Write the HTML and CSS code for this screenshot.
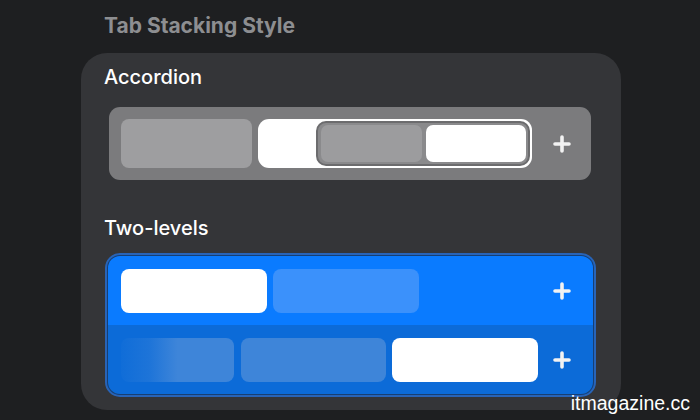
FILE: index.html
```html
<!DOCTYPE html>
<html>
<head>
<meta charset="utf-8">
<link rel="stylesheet" href="styles.css">
</head>
<body>
<div class="page">
  <div class="title">Tab Stacking Style</div>
  <div class="card">
    <div class="label">Accordion</div>
    <div class="acc-bar">
      <div class="acc-tab"></div>
      <div class="pill">
        <div class="group">
          <div class="g-tab g-gray"></div>
          <div class="g-tab g-white"></div>
        </div>
      </div>
      <svg class="plus plus-acc" width="18" height="18" viewBox="0 0 18 18"><path d="M9 2v14M2 9h14" stroke="#f2f2f2" stroke-width="3.6" stroke-linecap="round"/></svg>
    </div>
    <div class="label label-two">Two-levels</div>
    <div class="tl-wrap">
      <div class="tl-inner">
        <div class="row row-top">
          <div class="b-tab b-white"></div>
          <div class="b-tab b-light"></div>
          <svg class="plus" width="18" height="18" viewBox="0 0 18 18"><path d="M9 2v14M2 9h14" stroke="#f2f2f2" stroke-width="3.6" stroke-linecap="round"/></svg>
        </div>
        <div class="row row-bottom">
          <div class="b-tab b-fade"></div>
          <div class="b-tab b-mid"></div>
          <div class="b-tab b-white"></div>
          <svg class="plus" width="18" height="18" viewBox="0 0 18 18"><path d="M9 2v14M2 9h14" stroke="#f2f2f2" stroke-width="3.6" stroke-linecap="round"/></svg>
        </div>
      </div>
    </div>
  </div>
</div>
<div class="watermark">itmagazine.cc</div>
</body>
</html>
```

FILE: styles.css
```css
html, body {
  margin: 0;
  padding: 0;
}
body {
  width: 700px;
  height: 420px;
  overflow: hidden;
  background: #1e1f21;
  position: relative;
  font-family: Inter, "Liberation Sans", sans-serif;
}
.page {
  padding: 14px 0 0 81px;
}
.title {
  margin-left: 23px;
  font-weight: 700;
  font-size: 21px;
  line-height: 24px;
  color: #8d8e91;
}
.card {
  margin-top: 15px;
  width: 540px;
  height: 357px;
  box-sizing: border-box;
  background: #343538;
  border-radius: 26px;
  padding-top: 12px;
}
.label {
  margin-left: 23px;
  font-weight: 500;
  font-size: 20px;
  line-height: 24px;
  color: #ffffff;
}
.label-two {
  margin-top: 36px;
}
.acc-bar {
  margin: 18px 0 0 28px;
  width: 482px;
  height: 73px;
  box-sizing: border-box;
  padding: 12px 0 12px 12px;
  display: flex;
  align-items: center;
  background: #7b7b7d;
  border-radius: 11px;
}
.acc-tab {
  width: 131px;
  height: 49px;
  background: #9e9ea0;
  border-radius: 8px;
}
.pill {
  margin-left: 6px;
  width: 274px;
  height: 49px;
  box-sizing: border-box;
  background: #ffffff;
  border-radius: 11px;
  padding: 2px;
  display: flex;
  justify-content: flex-end;
}
.group {
  width: 214px;
  height: 45px;
  box-sizing: border-box;
  border: 2px solid #6c6c6e;
  background: #8a8a8c;
  border-radius: 10px;
  padding: 2px 2px 2px 3px;
  display: flex;
  gap: 4px;
}
.g-tab {
  flex: 1;
  border-radius: 7px;
}
.g-gray {
  background: #9c9c9e;
}
.g-white {
  background: #ffffff;
}
.plus {
  margin-left: auto;
  margin-right: 20px;
  flex: none;
}
.tl-wrap {
  margin: 13px 0 0 24px;
  width: 491px;
  height: 144px;
  box-sizing: border-box;
  border: 2px solid #2864b8;
  padding: 1px;
  background: #173f73;
  border-radius: 15px;
}
.tl-inner {
  height: 100%;
  border-radius: 12px;
  overflow: hidden;
  display: flex;
  flex-direction: column;
}
.row {
  flex: 1;
  display: flex;
  align-items: center;
  padding-left: 13px;
}
.row .plus {
  margin-right: 22px;
}
.row-top {
  background: #0a7bff;
}
.row-bottom {
  background: #0c6bd8;
}
.b-tab {
  width: 146px;
  height: 44px;
  border-radius: 8px;
  margin-right: 6px;
  flex: none;
}
.b-white {
  background: #ffffff;
}
.b-light {
  background: #3b91fb;
}
.b-mid {
  width: 145px;
  background: #3e85d9;
}
.b-fade {
  width: 113px;
  margin-right: 7px;
  background: linear-gradient(90deg, rgba(62, 133, 217, 0.08) 0%, rgba(62, 133, 217, 0.35) 25%, #3e85d9 50%);
}
.watermark {
  position: absolute;
  right: 10px;
  bottom: 6px;
  font-family: "Liberation Sans", sans-serif;
  font-size: 19.5px;
  line-height: 22px;
  color: #ffffff;
}
```
